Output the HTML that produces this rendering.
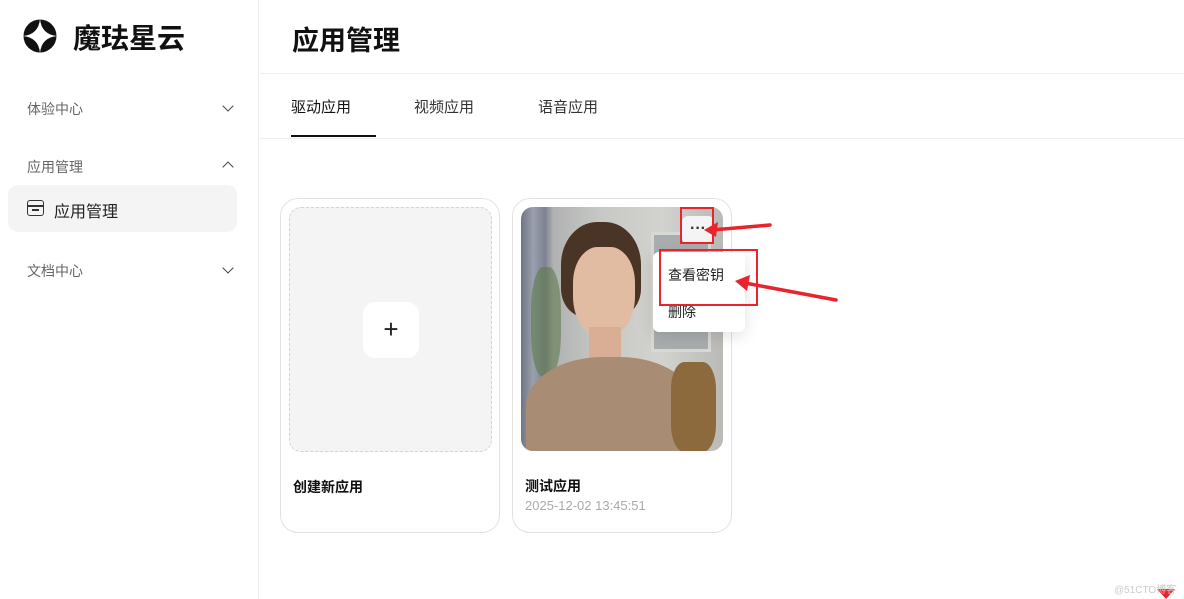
<!DOCTYPE html>
<html><head><meta charset="utf-8"><style>
*{margin:0;padding:0;box-sizing:border-box}
body{width:1184px;height:599px;overflow:hidden;background:#fff;font-family:"Liberation Sans","Noto Sans CJK SC",sans-serif;position:relative;color:#222}
.abs{position:absolute}
.side{left:0;top:0;width:259px;height:599px;border-right:1px solid #eee}
.nav{font-size:14px;color:#666}
.chev{width:8px;height:8px;border-right:1.8px solid #444;border-bottom:1.8px solid #444;transform:rotate(45deg)}
.up{transform:rotate(-135deg)}
.card{border:1px solid #e3e3e3;border-radius:18px;background:#fff}
.red{border:2px solid #e8242c}
</style></head><body>
<div class="abs side">
  <svg class="abs" style="left:23px;top:19px" width="34" height="34" viewBox="0 0 34 34">
    <circle cx="17" cy="17" r="16.5" fill="#111"/>
    <path d="M17 0 Q18.5 15.5 34 17 Q18.5 18.5 17 34 Q15.5 18.5 0 17 Q15.5 15.5 17 0Z" fill="#fff"/>
  </svg>
  <div class="abs" style="left:73px;top:17px;font-size:28px;font-weight:bold;color:#111">魔珐星云</div>
  <div class="abs nav" style="left:27px;top:99px">体验中心</div>
  <div class="abs chev" style="left:224px;top:102px"></div>
  <div class="abs nav" style="left:27px;top:157px">应用管理</div>
  <div class="abs chev up" style="left:224px;top:163px"></div>
  <div class="abs" style="left:8px;top:185px;width:229px;height:47px;background:#f4f4f4;border-radius:10px"></div>
  <div class="abs" style="left:27px;top:200px;width:17px;height:16px;border:1.8px solid #333;border-radius:3px"></div>
  <div class="abs" style="left:27px;top:205px;width:17px;height:1.8px;background:#333"></div>
  <div class="abs" style="left:32px;top:209px;width:7px;height:1.6px;background:#333"></div>
  <div class="abs" style="left:54px;top:198px;font-size:16px;color:#222">应用管理</div>
  <div class="abs nav" style="left:27px;top:261px">文档中心</div>
  <div class="abs chev" style="left:224px;top:264px"></div>
</div>
<div class="abs" style="left:292px;top:19px;font-size:27px;font-weight:bold;color:#111">应用管理</div>
<div class="abs" style="left:260px;top:73px;width:924px;height:1px;background:#eee"></div>
<div class="abs" style="left:291px;top:96px;font-size:15px;color:#111">驱动应用</div>
<div class="abs" style="left:414px;top:96px;font-size:15px;color:#333">视频应用</div>
<div class="abs" style="left:538px;top:96px;font-size:15px;color:#333">语音应用</div>
<div class="abs" style="left:291px;top:135px;width:85px;height:2px;background:#111"></div>
<div class="abs" style="left:260px;top:138px;width:924px;height:1px;background:#eee"></div>

<div class="abs card" style="left:280px;top:198px;width:220px;height:335px"></div>
<div class="abs" style="left:289px;top:207px;width:203px;height:245px;background:#f4f4f4;border:1px dashed #d4d4d4;border-radius:12px"></div>
<div class="abs" style="left:363px;top:302px;width:56px;height:56px;background:#fff;border-radius:12px;font-size:26px;text-align:center;line-height:54px;color:#222">+</div>
<div class="abs" style="left:293px;top:477px;font-size:14px;font-weight:bold;color:#111">创建新应用</div>

<div class="abs card" style="left:512px;top:198px;width:220px;height:335px"></div>
<div class="abs" style="left:521px;top:207px;width:202px;height:244px;border-radius:12px;overflow:hidden;background:linear-gradient(90deg,#6f7580 0,#9aa0ae 6%,#7d8290 12%,#b0b2b2 16%,#c8c9c6 40%,#d2d2ce 70%,#b9bab6 100%)">
  <div class="abs" style="left:130px;top:25px;width:60px;height:120px;background:#a9adad;border:3px solid #d8d8d4"></div>
  <div class="abs" style="left:10px;top:60px;width:30px;height:110px;background:#5f7a4c;opacity:.6;border-radius:40%"></div>
  <div class="abs" style="left:40px;top:15px;width:80px;height:95px;background:#4a3426;border-radius:45% 45% 30% 30%"></div>
  <div class="abs" style="left:52px;top:40px;width:62px;height:90px;background:#e2bba3;border-radius:40% 40% 45% 45%"></div>
  <div class="abs" style="left:68px;top:120px;width:32px;height:40px;background:#d9ae94"></div>
  <div class="abs" style="left:5px;top:150px;width:170px;height:110px;background:#a88c74;border-radius:45% 45% 0 0"></div>
  <div class="abs" style="left:150px;top:155px;width:45px;height:90px;background:#8c6a3e;border-radius:30%"></div>
</div>
<div class="abs" style="left:682px;top:216px;width:32px;height:28px;background:#f4f4f4;border-radius:6px;text-align:center;font-size:16px;font-weight:bold;line-height:26px;color:#333">···</div>
<div class="abs red" style="left:680px;top:207px;width:34px;height:37px"></div>
<div class="abs" style="left:525px;top:476px;font-size:14px;font-weight:bold;color:#111">测试应用</div>
<div class="abs" style="left:525px;top:498px;font-size:13px;color:#aaa">2025-12-02 13:45:51</div>

<div class="abs" style="left:653px;top:252px;width:92px;height:80px;background:#fff;border-radius:6px;box-shadow:0 4px 16px rgba(0,0,0,.12)"></div>
<div class="abs" style="left:668px;top:265px;font-size:14px;color:#222">查看密钥</div>
<div class="abs" style="left:668px;top:302px;font-size:14px;color:#222">删除</div>
<div class="abs red" style="left:659px;top:249px;width:99px;height:57px"></div>
<svg class="abs" style="left:0;top:0" width="1184" height="599">
  <line x1="770" y1="225" x2="712" y2="230" stroke="#e8242c" stroke-width="3.5" stroke-linecap="round"/>
  <path d="M704 230 L718 222 L716 237Z" fill="#e8242c"/>
  <line x1="836" y1="300" x2="745" y2="283" stroke="#e8242c" stroke-width="3.5" stroke-linecap="round"/>
  <path d="M735 281 L750 275 L747 291Z" fill="#e8242c"/>
  <path d="M1157 589 L1175 589 L1166 599Z" fill="#e8242c"/>
</svg>
<div class="abs" style="left:1114px;top:581px;font-size:10px;color:#ccc">@51CTO博客</div>
</body></html>
